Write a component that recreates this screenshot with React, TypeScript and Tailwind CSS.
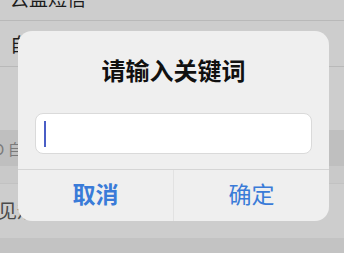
import React from 'react';

const cjk = { fontFamily: '"Noto Sans CJK SC", "Noto Sans", sans-serif' };

export default function App() {
  return (
    <div className="relative w-[344px] h-[253px] overflow-hidden bg-[#cdcdcd]" style={cjk}>
      {/* dimmed settings list behind the alert */}
      <div className="flex flex-col">
        <div className="h-[46px] -mt-[25px] flex items-center pl-[10px] text-[19px] leading-none text-[#1c1c1c] border-b border-[#b9b9b9]">
          云盆短信
        </div>
        <div className="h-[46px] flex items-center pl-[10px] text-[19px] leading-none text-[#1c1c1c] border-b border-[#b9b9b9]">
          自定义
        </div>
        <div className="h-[63px]" />
        <div className="h-[36px] bg-[#bfbfbf] flex items-end pb-[10px] -ml-[6px] text-[15px] leading-none text-[#7a7a7a]">
          D 自
        </div>
        <div className="h-[18px] bg-[#c9c9c9] border-b border-[#c2c2c2]" />
        <div className="h-[54px] flex items-center -ml-[2px] pb-[4px] text-[19px] leading-none text-[#4a4a4a]">
          见规则
        </div>
        <div className="h-[20px] bg-[#c3c3c3]" />
      </div>

      {/* alert */}
      <div className="absolute left-[18px] top-[31px] w-[311px] h-[190px] rounded-[14px] bg-[#efefef] flex flex-col">
        <div className="h-[82px] flex items-center justify-center pb-[4px] text-[24px] font-bold leading-none text-[#111111]">
          请输入关键词
        </div>
        <div className="mx-[17px] h-[41px] rounded-[8px] bg-white border border-[#dadada] flex items-center pl-[8px]">
          <div className="w-[2px] h-[26px] bg-[#4a5ec6]" />
        </div>
        <div className="mt-[15px] flex-1 flex border-t border-[#d5d5d5]">
          <div className="flex-1 flex items-center justify-center pb-[4px] text-[23px] font-bold leading-none text-[#3a7bd8]">
            取消
          </div>
          <div className="w-px bg-[#e2e2e2]" />
          <div className="flex-1 flex items-center justify-center pb-[4px] text-[23px] leading-none text-[#3a7bd8]">
            确定
          </div>
        </div>
      </div>
    </div>
  );
}
